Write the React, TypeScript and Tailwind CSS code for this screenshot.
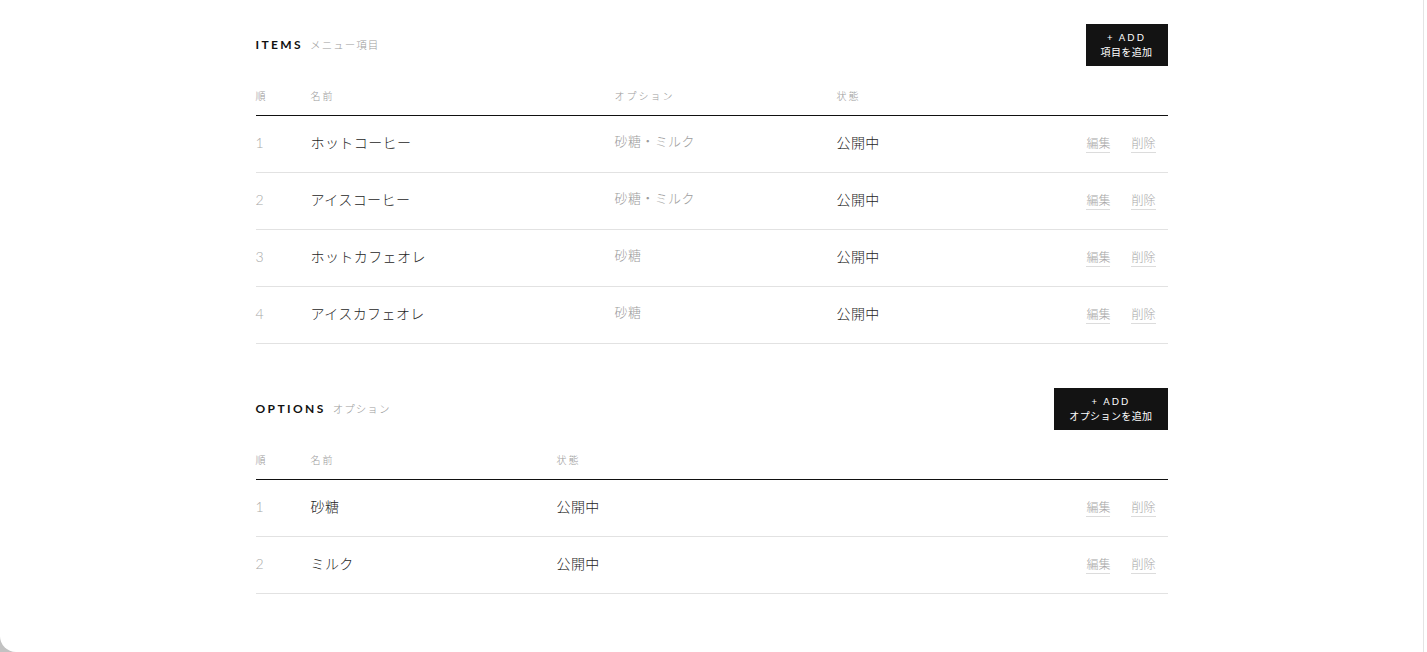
import React from 'react';

type Item = { no: number; name: string; options: string; status: string };
type Option = { no: number; name: string; status: string };

const items: Item[] = [
  { no: 1, name: 'ホットコーヒー', options: '砂糖・ミルク', status: '公開中' },
  { no: 2, name: 'アイスコーヒー', options: '砂糖・ミルク', status: '公開中' },
  { no: 3, name: 'ホットカフェオレ', options: '砂糖', status: '公開中' },
  { no: 4, name: 'アイスカフェオレ', options: '砂糖', status: '公開中' },
];

const options: Option[] = [
  { no: 1, name: '砂糖', status: '公開中' },
  { no: 2, name: 'ミルク', status: '公開中' },
];

const font = "font-['Lato','Noto_Sans_CJK_JP',sans-serif]";

function SectionHead({ title, sub, label }: { title: string; sub: string; label: string }) {
  return (
    <div className="flex items-start justify-between mb-[23px]">
      <div className="flex items-baseline gap-[7px] pt-[12px]">
        <span className="text-[12px] font-bold tracking-[0.2em] text-[#111]">{title}</span>
        <span className="text-[10.5px] font-light tracking-[0.1em] text-[#9a9a9a]">{sub}</span>
      </div>
      <button className="bg-[#131313] text-white px-[15px] h-[42px] flex flex-col items-center justify-center leading-[14px]">
        <span className="text-[9.5px] tracking-[0.22em]">+ ADD</span>
        <span className="text-[10px] tracking-[0.04em]">{label}</span>
      </button>
    </div>
  );
}

function Actions() {
  return (
    <div className="flex justify-end gap-[21px] pr-[12px] pt-[3px]">
      <span className="text-[12px] font-light text-[#a8a8a8] border-b border-[#dcdcdc] leading-[17px]">編集</span>
      <span className="text-[12px] font-light text-[#a8a8a8] border-b border-[#dcdcdc] leading-[17px]">削除</span>
    </div>
  );
}

const headCls = 'text-[10px] font-light tracking-[0.2em] text-[#9a9a9a] leading-[14px]';
const rowText = 'text-[14px] font-light text-[#262626] tracking-[0.03em]';

export default function App() {
  return (
    <div className={`flex h-[652px] w-full bg-[#c2c2c2] ${font}`}>
      <div className="w-[1424px] h-full bg-white rounded-bl-[16px] border-r border-[#e4e4e4]">
        <div className="mx-auto w-[912px] pt-[24px]">
          <SectionHead title="ITEMS" sub="メニュー項目" label="項目を追加" />
          <div className="grid grid-cols-[55px_304px_222px_1fr_auto] border-b border-[#111] pb-[12px]">
            <span className={headCls}>順</span>
            <span className={headCls}>名前</span>
            <span className={headCls}>オプション</span>
            <span className={headCls}>状態</span>
            <span />
          </div>
          {items.map((it) => (
            <div
              key={it.no}
              className="grid grid-cols-[55px_304px_222px_1fr_auto] items-center h-[57px] pb-[4px] border-b border-[#e2e2e2]"
            >
              <span className="text-[14px] font-light text-[#a8a8a8]">{it.no}</span>
              <span className={rowText}>{it.name}</span>
              <span className="text-[13px] font-light text-[#9c9c9c] tracking-[0.03em]">{it.options}</span>
              <span className={rowText}>{it.status}</span>
              <Actions />
            </div>
          ))}

          <div className="mt-[44px]">
            <SectionHead title="OPTIONS" sub="オプション" label="オプションを追加" />
          </div>
          <div className="grid grid-cols-[55px_246px_1fr_auto] border-b border-[#111] pb-[12px]">
            <span className={headCls}>順</span>
            <span className={headCls}>名前</span>
            <span className={headCls}>状態</span>
            <span />
          </div>
          {options.map((op) => (
            <div
              key={op.no}
              className="grid grid-cols-[55px_246px_1fr_auto] items-center h-[57px] pb-[4px] border-b border-[#e2e2e2]"
            >
              <span className="text-[14px] font-light text-[#a8a8a8]">{op.no}</span>
              <span className={rowText}>{op.name}</span>
              <span className={rowText}>{op.status}</span>
              <Actions />
            </div>
          ))}
        </div>
      </div>
      <div className="flex-1 bg-white" />
    </div>
  );
}
